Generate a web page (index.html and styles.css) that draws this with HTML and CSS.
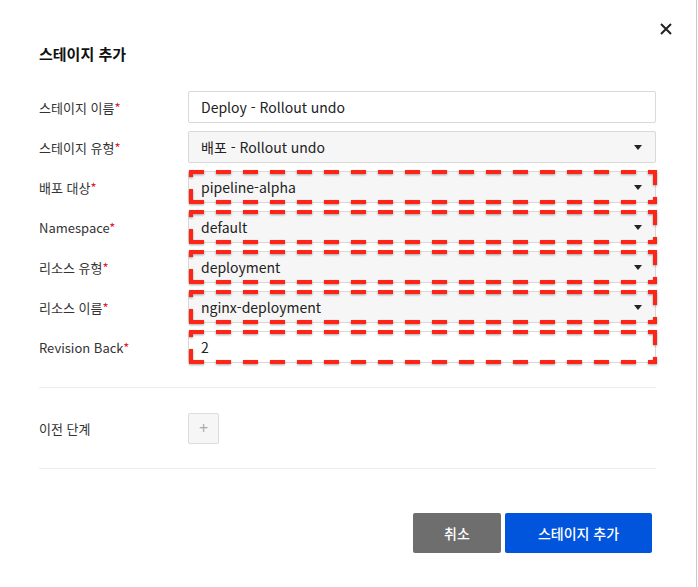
FILE: index.html
```html
<!DOCTYPE html>
<html lang="ko">
<head>
<meta charset="utf-8">
<link rel="stylesheet" href="styles.css">
</head>
<body>
<div class="dialog">
  <div class="head">
    <button class="close" aria-label="close">
      <svg width="12" height="12" viewBox="0 0 12 12"><path d="M1 1L11 11M11 1L1 11" stroke="#222" stroke-width="2" fill="none"/></svg>
    </button>
  </div>
  <h1 class="title">스테이지 추가</h1>
  <div class="form">
    <div class="row"><label class="label">스테이지 이름<span class="req">*</span></label><div class="field input">Deploy - Rollout undo</div></div>
    <div class="row"><label class="label">스테이지 유형<span class="req">*</span></label><div class="field select">배포 - Rollout undo<span class="caret"></span></div></div>
    <div class="row"><label class="label">배포 대상<span class="req">*</span></label><div class="field select mark">pipeline-alpha<span class="caret"></span></div></div>
    <div class="row"><label class="label">Namespace<span class="req">*</span></label><div class="field select mark">default<span class="caret"></span></div></div>
    <div class="row"><label class="label">리소스 유형<span class="req">*</span></label><div class="field select mark">deployment<span class="caret"></span></div></div>
    <div class="row"><label class="label">리소스 이름<span class="req">*</span></label><div class="field select mark">nginx-deployment<span class="caret"></span></div></div>
    <div class="row"><label class="label">Revision Back<span class="req">*</span></label><div class="field input mark">2</div></div>
  </div>
  <div class="prev">
    <span class="label">이전 단계</span>
    <button class="plus">+</button>
  </div>
  <div class="actions">
    <button class="btn cancel">취소</button>
    <button class="btn primary">스테이지 추가</button>
  </div>
</div>
</body>
</html>
```
FILE: styles.css
```css
* { box-sizing: border-box; }
html, body { margin: 0; padding: 0; background: #fff; }
body {
  font-family: "Noto Sans CJK KR", "Noto Sans", sans-serif;
  color: #333;
}
.dialog {
  width: 697px;
  height: 587px;
  border-right: 1px solid #c9c9c9;
  padding: 0 40px 0 39px;
}
.head {
  display: flex;
  justify-content: flex-end;
  padding-top: 23px;
  margin-right: -16px;
  height: 35px;
}
.close {
  border: 0;
  background: none;
  padding: 0;
  width: 12px;
  height: 12px;
  display: flex;
}
.title {
  margin: 8px 0 0;
  font-size: 15px;
  line-height: 22px;
  font-weight: 700;
  color: #111;
}
.form {
  margin-top: 26px;
  display: flex;
  flex-direction: column;
  gap: 8px;
}
.row {
  display: flex;
  align-items: center;
  height: 32px;
}
.label {
  width: 149px;
  flex: none;
  font-size: 13px;
  color: #333;
}
.req { color: #e0202a; }
.field {
  position: relative;
  flex: 1;
  height: 32px;
  border: 1px solid #d9d9d9;
  border-radius: 2px;
  padding: 0 12px;
  display: flex;
  align-items: center;
  font-size: 14px;
  color: #222;
}
.input { background: #fff; }
.select { background: #f6f6f6; }
.caret {
  position: absolute;
  right: 13px;
  top: 13px;
  width: 0;
  height: 0;
  border-left: 4px solid transparent;
  border-right: 4px solid transparent;
  border-top: 5px solid #222;
}
.mark::after {
  content: "";
  position: absolute;
  left: 0;
  right: -2px;
  top: -2px;
  bottom: -2px;
  background:
    repeating-linear-gradient(90deg, #ff2418 0 15px, transparent 15px 27px) left top / 100% 4px no-repeat,
    repeating-linear-gradient(90deg, #ff2418 0 15px, transparent 15px 27px) left bottom / 100% 4px no-repeat,
    repeating-linear-gradient(0deg, #ff2418 0 15px, transparent 15px 27px) left top / 4px 100% no-repeat,
    repeating-linear-gradient(180deg, #ff2418 0 15px, transparent 15px 27px) right top / 4px 100% no-repeat;
  filter: drop-shadow(0 1px 1px rgba(0,0,0,0.35));
  pointer-events: none;
}
.prev {
  margin-top: 24px;
  border-top: 1px solid #ececec;
  border-bottom: 1px solid #ececec;
  height: 82px;
  display: flex;
  align-items: center;
}
.plus {
  width: 31px;
  height: 31px;
  border: 1px solid #dcdcdc;
  background: #f6f6f6;
  border-radius: 2px;
  color: #aaa;
  font-size: 16px;
  line-height: 1;
  padding: 0;
  font-family: "Noto Sans", sans-serif;
}
.actions {
  margin-top: 44px;
  display: flex;
  justify-content: flex-end;
  gap: 4px;
  margin-right: 4px;
}
.btn {
  height: 40px;
  border: 0;
  border-radius: 2px;
  color: #fff;
  font-family: inherit;
  font-size: 14px;
  font-weight: 500;
}
.cancel { width: 88px; background: #6e6e6e; }
.primary { width: 147px; background: #0055dc; }
```
